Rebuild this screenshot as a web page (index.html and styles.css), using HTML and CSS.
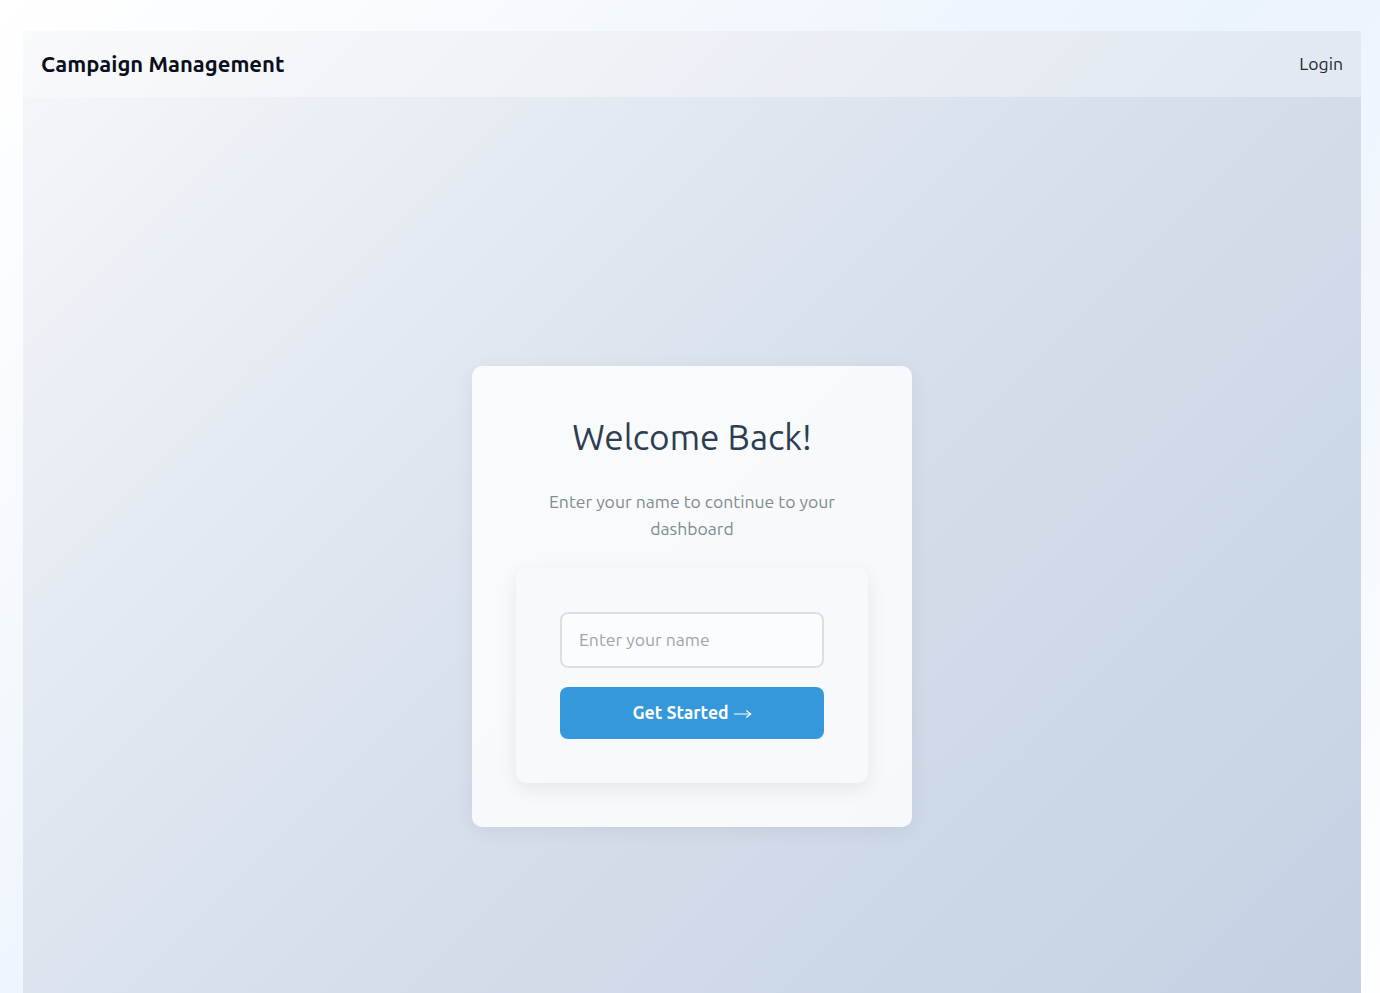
FILE: index.html
```html
<!DOCTYPE html>
<html lang="en">
<head>
<meta charset="utf-8">
<title>Campaign Management</title>
<link rel="stylesheet" href="styles.css">
</head>
<body>
<div class="app">
  <header class="navbar">
    <div class="brand">Campaign Management</div>
    <a class="nav-link" href="#">Login</a>
  </header>
  <main class="main">
    <section class="card">
      <h1 class="title">Welcome Back!</h1>
      <p class="subtitle">Enter your name to continue to your dashboard</p>
      <div class="form-card">
        <input class="name-input" type="text" placeholder="Enter your name">
        <button class="btn" type="button">Get Started<svg class="arrow" width="18" height="10" viewBox="0 0 18 10" aria-hidden="true"><path d="M0.5 5H16.5M12.5 1.8L16.8 5L12.5 8.2" fill="none" stroke="#ffffff" stroke-width="1.2" stroke-linecap="round" stroke-linejoin="round"/></svg></button>
      </div>
    </section>
  </main>
</div>
</body>
</html>
```

FILE: styles.css
```css
html {
  background: linear-gradient(135deg, #ffffff 0%, #ebf3fc 50%, #ffffff 100%);
  min-height: 100%;
}
body {
  margin: 0;
  padding: 31px 19px 0 23px;
  font-family: "Ubuntu", "Open Sans", "Noto Sans", sans-serif;
  color: #2c3e50;
}
.app {
  background: linear-gradient(135deg, #f5f7fa 0%, #d6dfeb 50%, #c3cfe2 100%);
}
.navbar {
  box-sizing: border-box;
  height: 66px;
  display: flex;
  align-items: center;
  justify-content: space-between;
  padding: 0 18px 2px;
  background: rgba(255, 255, 255, 0.35);
}
.brand {
  font-size: 22px;
  font-weight: 700;
  color: #0a0f1c;
}
.nav-link {
  font-size: 17.6px;
  color: #1f2933;
  text-decoration: none;
}
.main {
  height: 999px;
  display: flex;
  align-items: center;
  justify-content: center;
}
.card {
  width: 352px;
  padding: 44px;
  background: rgba(255, 255, 255, 0.82);
  border-radius: 10px;
  box-shadow: 0 4px 20px rgba(0, 0, 0, 0.06);
  text-align: center;
}
.title {
  margin: 5px 0 0;
  font-size: 35.2px;
  line-height: 44px;
  font-weight: 400;
  color: #2c3e50;
}
.subtitle {
  margin: 29px auto 26px;
  max-width: 310px;
  font-size: 17.6px;
  line-height: 27px;
  font-weight: 400;
  color: #7f8c8d;
}
.form-card {
  display: flex;
  flex-direction: column;
  gap: 19px;
  padding: 44px;
  background: #f7f9fc;
  border-radius: 10px;
  box-shadow: 0 6px 20px rgba(0, 0, 0, 0.08);
}
.name-input {
  box-sizing: border-box;
  width: 100%;
  height: 56px;
  padding: 0 17px 2px;
  border: 2px solid #dcdfe3;
  border-radius: 8px;
  background: #fbfcfe;
  font-family: inherit;
  font-size: 17.6px;
  font-weight: 400;
  color: #2c3e50;
  outline: none;
}
.name-input::placeholder {
  color: #a0a4ab;
}
.btn {
  box-sizing: border-box;
  height: 52px;
  display: flex;
  align-items: center;
  justify-content: center;
  gap: 5px;
  padding: 0 0 2px;
  border: none;
  border-radius: 8px;
  background: #3498db;
  color: #ffffff;
  font-family: inherit;
  font-size: 17.6px;
  font-weight: 700;
  cursor: pointer;
}
.arrow {
  margin-top: 3px;
}
```
